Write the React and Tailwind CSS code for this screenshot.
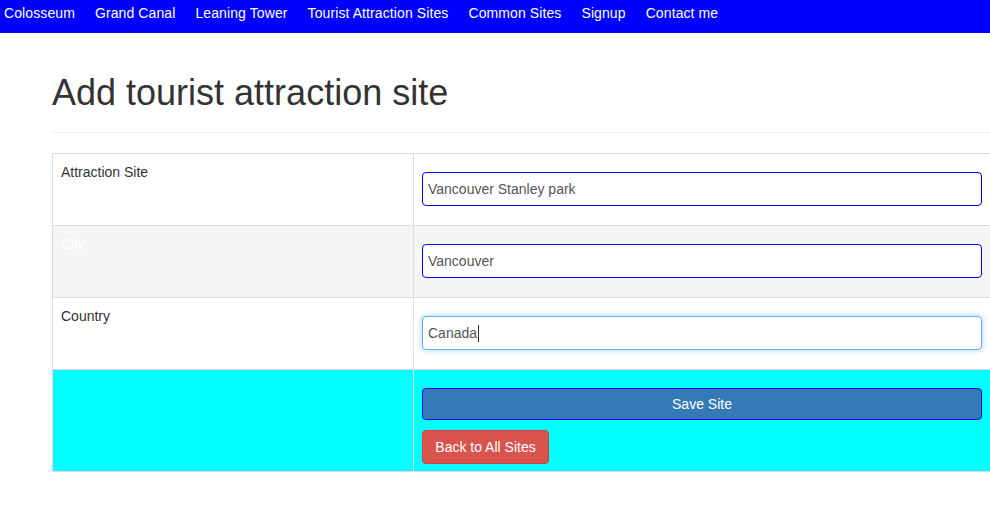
export default function App() {
  const links = ['Colosseum', 'Grand Canal', 'Leaning Tower', 'Tourist Attraction Sites', 'Common Sites', 'Signup', 'Contact me']

  return (
    <div className="min-h-[514px] w-[990px] overflow-hidden bg-white text-[14px] leading-[20px] text-[#333]" style={{ fontFamily: '"Liberation Sans", Arial, sans-serif' }}>
      <nav className="flex h-[33px] items-start bg-[#0000ff] pl-[4px] pt-[3px] tracking-[0.1px]">
        {links.map((l) => (
          <a key={l} href="#" className="mr-5 text-white">{l}</a>
        ))}
      </nav>

      <div className="ml-[52px] w-[938px]">
        <h1 className="mt-[40px] text-[36px] leading-[40px] text-[#333]">Add tourist attraction site</h1>
        <hr className="mt-[19px] border-t border-[#eee]" />

        <div className="mt-[20px] border-l border-[#ddd]">
          <Row label="Attraction Site" value="Vancouver Stanley park" />
          <Row label="City" value="Vancouver" striped />
          <Row label="Country" value="Canada" focused />
          <div className="flex border-t border-b border-[#ddd] bg-[#00ffff]">
            <div className="w-[361px] border-r border-[#ddd]" />
            <div className="flex-1 px-2 pt-[18px] pb-[7px]">
              <button className="block h-[32px] w-full rounded-[4px] border border-[#0000ff] bg-[#337ab7] text-white">Save Site</button>
              <button className="mt-[10px] block h-[34px] w-[127px] rounded-[4px] border border-[#d43f3a] bg-[#d9534f] text-white">Back to All Sites</button>
            </div>
          </div>
        </div>
      </div>
    </div>
  )
}

function Row({ label, value, striped, focused }) {
  return (
    <div className={`flex h-[72px] border-t border-[#ddd] ${striped ? 'bg-[#f5f5f5]' : 'bg-white'}`}>
      <div className={`w-[361px] border-r border-[#ddd] p-2 ${striped ? 'text-white' : 'text-[#333]'}`}>{label}</div>
      <div className="flex-1 px-2 pt-[18px]">
        <div
          className={`flex h-[34px] items-center rounded-[4px] border bg-white px-[5px] text-[#555] ${
            focused ? 'border-[#66afe9] shadow-[0_0_6px_rgba(102,175,233,0.6)]' : 'border-[#0000ff]'
          }`}
        >
          {value}
          {focused && <span className="ml-[1px] inline-block h-[17px] w-px bg-[#333]" />}
        </div>
      </div>
    </div>
  )
}
